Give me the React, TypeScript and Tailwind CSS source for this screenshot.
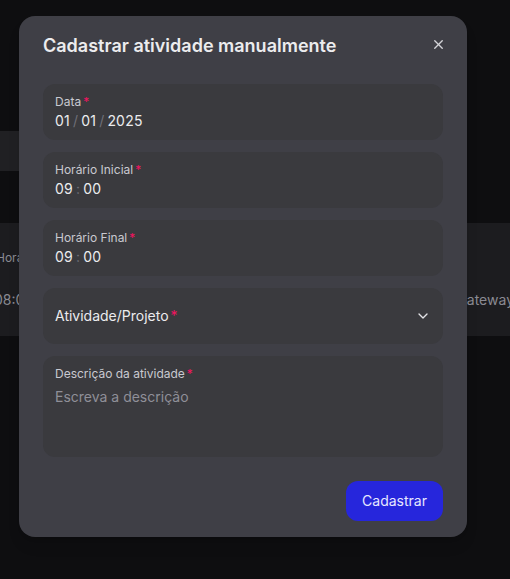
import React from 'react';
import { ChevronDown, X } from 'lucide-react';

function Req() {
  return <span className="ml-0.5 text-[#f31260]">*</span>;
}

function DateField({ label, parts, sep }: { label: string; parts: string[]; sep: string }) {
  return (
    <div className="flex h-14 flex-col justify-center rounded-xl bg-[#3a3a3e] px-3">
      <label className="text-xs leading-4 text-[#c9c9d0]">
        {label}
        <Req />
      </label>
      <div className="mt-px flex items-center text-sm leading-5 tracking-[0.2px] text-[#ececee]">
        {parts.map((p, i) => (
          <React.Fragment key={i}>
            {i > 0 && <span className="px-[3px] text-[#6f6f78]">{sep}</span>}
            <span>{p}</span>
          </React.Fragment>
        ))}
      </div>
    </div>
  );
}

export default function App() {
  return (
    <div className="relative h-[579px] w-[510px] overflow-hidden bg-[#0e0e10] font-['Inter',sans-serif]">
      {/* page behind the modal */}
      <div className="flex flex-col pt-[131px]">
        <div className="h-10 w-[300px] bg-[#202023]" />
        <div className="mt-[52px] flex h-[113px] flex-col justify-center gap-6 bg-[#1c1c1f] text-sm text-[#8a8a92]">
          <div className="-ml-1 text-xs">Hora</div>
          <div className="flex justify-between">
            <span className="-ml-1.5">08:00</span>
            <span className="-mr-1">Gateway</span>
          </div>
        </div>
      </div>

      {/* modal */}
      <div className="absolute left-[19px] top-4 flex w-[448px] flex-col rounded-2xl bg-[#3f3f46] shadow-lg">
        <div className="flex items-center justify-between px-6 py-4">
          <h2 className="text-lg font-semibold leading-7 text-[#ececee]">Cadastrar atividade manualmente</h2>
          <X size={15} strokeWidth={2.2} className="-mt-1 mr-[-3px] text-[#d4d4d8]" />
        </div>

        <div className="flex flex-col gap-3 px-6 py-2">
          <DateField label="Data" parts={['01', '01', '2025']} sep="/" />
          <DateField label="Horário Inicial" parts={['09', '00']} sep=":" />
          <DateField label="Horário Final" parts={['09', '00']} sep=":" />

          <div className="flex h-14 items-center justify-between rounded-xl bg-[#3a3a3e] px-3">
            <span className="text-sm text-[#ececee]">
              Atividade/Projeto
              <Req />
            </span>
            <ChevronDown size={16} strokeWidth={2} className="text-[#e4e4e7]" />
          </div>

          <div className="flex h-[101px] flex-col rounded-xl bg-[#3a3a3e] px-3 pt-[10px]">
            <label className="text-xs leading-4 text-[#c9c9d0]">
              Descrição da atividade
              <Req />
            </label>
            <span className="mt-[5px] text-sm leading-5 text-[#8f8f98]">Escreva a descrição</span>
          </div>
        </div>

        <div className="flex justify-end px-6 py-4">
          <button className="h-10 rounded-xl bg-[#2626dc] px-4 text-sm text-[#e6e6ff]">Cadastrar</button>
        </div>
      </div>
    </div>
  );
}
